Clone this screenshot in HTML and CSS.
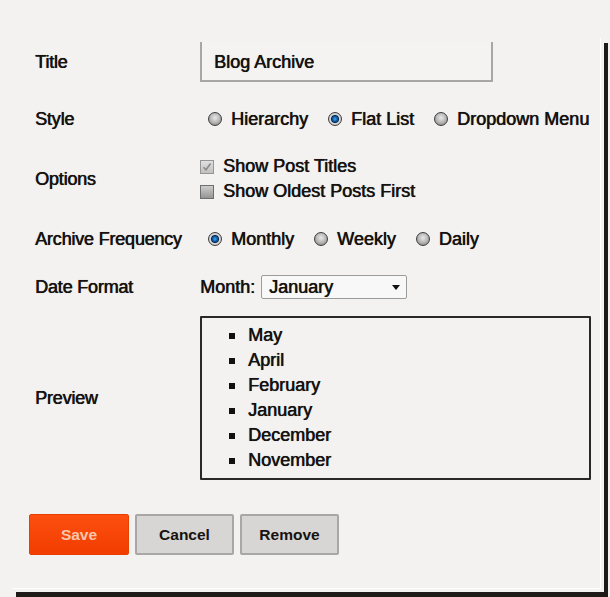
FILE: index.html
```html
<!DOCTYPE html>
<html>
<head>
<meta charset="utf-8">
<link rel="stylesheet" href="styles.css">
</head>
<body>
<div class="panel">
  <div class="row row-title">
    <div class="label">Title</div>
    <div class="control"><div class="textbox">Blog Archive</div></div>
  </div>
  <div class="row row-style">
    <div class="label">Style</div>
    <div class="control radios">
      <span class="opt"><span class="radio"></span>Hierarchy</span>
      <span class="opt"><span class="radio on"></span>Flat List</span>
      <span class="opt"><span class="radio"></span>Dropdown Menu</span>
    </div>
  </div>
  <div class="row row-options">
    <div class="label">Options</div>
    <div class="control checks">
      <span class="check-line"><span class="checkbox on"><svg viewBox="0 0 10 10" width="10" height="10"><path d="M1.5 5.2 L4 7.8 L8.6 1.6" fill="none" stroke="#8a8a8a" stroke-width="1.6"/></svg></span>Show Post Titles</span>
      <span class="check-line"><span class="checkbox"></span>Show Oldest Posts First</span>
    </div>
  </div>
  <div class="row row-freq">
    <div class="label">Archive Frequency</div>
    <div class="control radios">
      <span class="opt"><span class="radio on"></span>Monthly</span>
      <span class="opt"><span class="radio"></span>Weekly</span>
      <span class="opt"><span class="radio"></span>Daily</span>
    </div>
  </div>
  <div class="row row-date">
    <div class="label">Date Format</div>
    <div class="control date">
      <span class="month">Month:</span>
      <div class="select"><span>January</span><span class="arrow"></span></div>
    </div>
  </div>
  <div class="row row-preview">
    <div class="label">Preview</div>
    <div class="control">
      <div class="preview">
        <ul>
          <li>May</li>
          <li>April</li>
          <li>February</li>
          <li>January</li>
          <li>December</li>
          <li>November</li>
        </ul>
      </div>
    </div>
  </div>
  <div class="buttons">
    <button class="btn save">Save</button>
    <button class="btn grey">Cancel</button>
    <button class="btn grey">Remove</button>
  </div>
</div>
</body>
</html>
```

FILE: styles.css
```css
html, body {
  margin: 0;
  padding: 0;
}
body {
  background: #f3f2f1;
  width: 610px;
  height: 597px;
  overflow: hidden;
  padding-top: 38px;
  box-sizing: border-box;
  font-family: "Liberation Sans", Arial, sans-serif;
  font-size: 18px;
  color: #16120f;
}
.panel {
  margin-left: 12px;
  width: 592px;
  height: 554px;
  box-sizing: border-box;
  padding: 4px 0 0 23px;
  box-shadow: 4px 5px 0 #1e1a18, inset -3px -3px 0 #f3f2f1, inset -4px -4px 0 #ffffff;
  display: flex;
  flex-direction: column;
}
.row {
  display: grid;
  grid-template-columns: 165px 1fr;
  align-items: center;
}
.label,
.control {
  text-shadow: 0.5px 0 0 #16120f, 0 0 1px rgba(40, 30, 10, 0.35);
}
.label {
  letter-spacing: -0.2px;
  white-space: nowrap;
}
.row-title { height: 40px; }
.row-style { height: 38px; margin-top: 18px; }
.row-options { height: 50px; margin-top: 16px; }
.row-freq { height: 38px; margin-top: 16px; }
.row-date { height: 38px; margin-top: 10px; }
.row-preview { height: 164px; margin-top: 10px; }

.textbox {
  width: 293px;
  height: 40px;
  box-sizing: border-box;
  border: 2px solid #a9a7a5;
  border-top: 0;
  padding: 2px 0 0 12px;
  display: flex;
  align-items: center;
  background: #f4f3f2;
}

.radios {
  display: flex;
  align-items: center;
  padding-left: 8px;
  white-space: nowrap;
}
.opt {
  display: inline-flex;
  align-items: center;
  flex-shrink: 0;
  white-space: nowrap;
  margin-right: 20px;
}
.opt:last-child {
  margin-right: 0;
}
.radio {
  width: 14px;
  height: 14px;
  flex-shrink: 0;
  border-radius: 50%;
  box-sizing: border-box;
  border: 1px solid #3e3e3e;
  background: radial-gradient(circle at 50% 40%, #e8e8e8 0, #bdbdbd 45%, #777 100%);
  margin-right: 9px;
}
.radio.on {
  background: radial-gradient(circle at 50% 50%, #43a6ee 0, #0d5ca8 28%, #0a2a50 42%, #dcdcdc 54%, #9a9a9a 100%);
}

.checks {
  display: flex;
  flex-direction: column;
}
.check-line {
  display: flex;
  align-items: center;
  height: 25px;
  white-space: nowrap;
}
.checkbox {
  width: 14px;
  height: 14px;
  flex-shrink: 0;
  box-sizing: border-box;
  border: 1px solid #6e6e6e;
  background: linear-gradient(#cdcdcd, #959595);
  margin-right: 9px;
  display: inline-flex;
  align-items: center;
  justify-content: center;
}
.checkbox.on {
  background: linear-gradient(#e0e0e0, #c0c0c0);
  border-color: #959595;
}
.checkbox svg { display: block; }

.date {
  display: flex;
  align-items: center;
}
.month { margin-right: 6px; }
.select {
  width: 146px;
  height: 24px;
  box-sizing: border-box;
  border: 1px solid #9b9b9b;
  border-radius: 2px;
  background: #f8f8f8;
  display: flex;
  align-items: center;
  justify-content: space-between;
  padding: 0 6px 0 7px;
}
.arrow {
  width: 0;
  height: 0;
  border-left: 4px solid transparent;
  border-right: 4px solid transparent;
  border-top: 5px solid #111;
}

.preview {
  width: 391px;
  height: 164px;
  box-sizing: border-box;
  border: 2px solid #2b2725;
  border-radius: 1px;
}
.preview ul {
  margin: 0;
  padding: 5px 0 0 27px;
  list-style: none;
}
.preview li {
  height: 25px;
  display: flex;
  align-items: center;
}
.preview li::before {
  content: "";
  width: 6px;
  height: 6px;
  background: #111;
  margin-right: 13px;
}

.buttons {
  display: flex;
  gap: 6px;
  margin-top: 34px;
  margin-left: -6px;
}
.btn {
  width: 100px;
  height: 41px;
  box-sizing: border-box;
  font-family: "Liberation Sans", Arial, sans-serif;
  font-weight: bold;
  font-size: 15.5px;
  border-radius: 2px;
  padding: 0;
}
.save {
  background: linear-gradient(#fc4f10, #f23d00);
  border: 1px solid #e84000;
  color: #f9c6ac;
}
.grey {
  background: #d7d6d4;
  border: 2px solid #a8a7a5;
  color: #16120f;
  width: 99px;
}
```
